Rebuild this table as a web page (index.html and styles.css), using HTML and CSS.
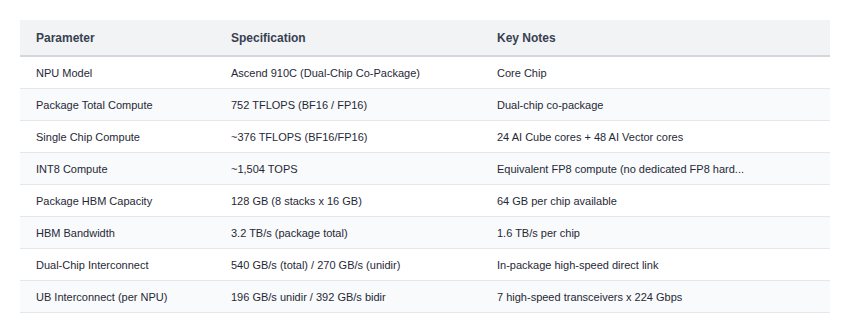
FILE: index.html
```html
<!DOCTYPE html>
<html>
<head>
<meta charset="utf-8">
<link rel="stylesheet" href="styles.css">
</head>
<body>
<div class="wrap">
<table class="spec">
<colgroup><col class="c1"><col class="c2"><col class="c3"></colgroup>
<thead>
<tr><th>Parameter</th><th>Specification</th><th>Key Notes</th></tr>
</thead>
<tbody>
<tr><td>NPU Model</td><td>Ascend 910C (Dual-Chip Co-Package)</td><td>Core Chip</td></tr>
<tr><td>Package Total Compute</td><td>752 TFLOPS (BF16 / FP16)</td><td>Dual-chip co-package</td></tr>
<tr><td>Single Chip Compute</td><td>~376 TFLOPS (BF16/FP16)</td><td>24 AI Cube cores + 48 AI Vector cores</td></tr>
<tr><td>INT8 Compute</td><td>~1,504 TOPS</td><td>Equivalent FP8 compute (no dedicated FP8 hard...</td></tr>
<tr><td>Package HBM Capacity</td><td>128 GB (8 stacks x 16 GB)</td><td>64 GB per chip available</td></tr>
<tr><td>HBM Bandwidth</td><td>3.2 TB/s (package total)</td><td>1.6 TB/s per chip</td></tr>
<tr><td>Dual-Chip Interconnect</td><td>540 GB/s (total) / 270 GB/s (unidir)</td><td>In-package high-speed direct link</td></tr>
<tr><td>UB Interconnect (per NPU)</td><td>196 GB/s unidir / 392 GB/s bidir</td><td>7 high-speed transceivers x 224 Gbps</td></tr>
</tbody>
</table>
</div>
</body>
</html>
```
FILE: styles.css
```css
html, body {
  margin: 0;
  padding: 0;
  background: #ffffff;
}
.wrap {
  padding: 20px;
}
.spec {
  width: 810px;
  border-collapse: collapse;
  table-layout: fixed;
  font-family: "Liberation Sans", Arial, sans-serif;
}
.c1 { width: 195px; }
.c2 { width: 266px; }
.spec th {
  background: #f2f3f5;
  color: #374151;
  font-size: 12px;
  font-weight: bold;
  text-align: left;
  height: 35px;
  padding: 0 16px;
  border-bottom: 2px solid #d6d5dd;
}
.spec td {
  color: #1f2937;
  font-size: 11px;
  height: 31px;
  padding: 0 16px;
  border-bottom: 1px solid #e5e7eb;
  white-space: nowrap;
  overflow: hidden;
}
.spec tbody tr:nth-child(even) td {
  background: #f9fafb;
}
```
